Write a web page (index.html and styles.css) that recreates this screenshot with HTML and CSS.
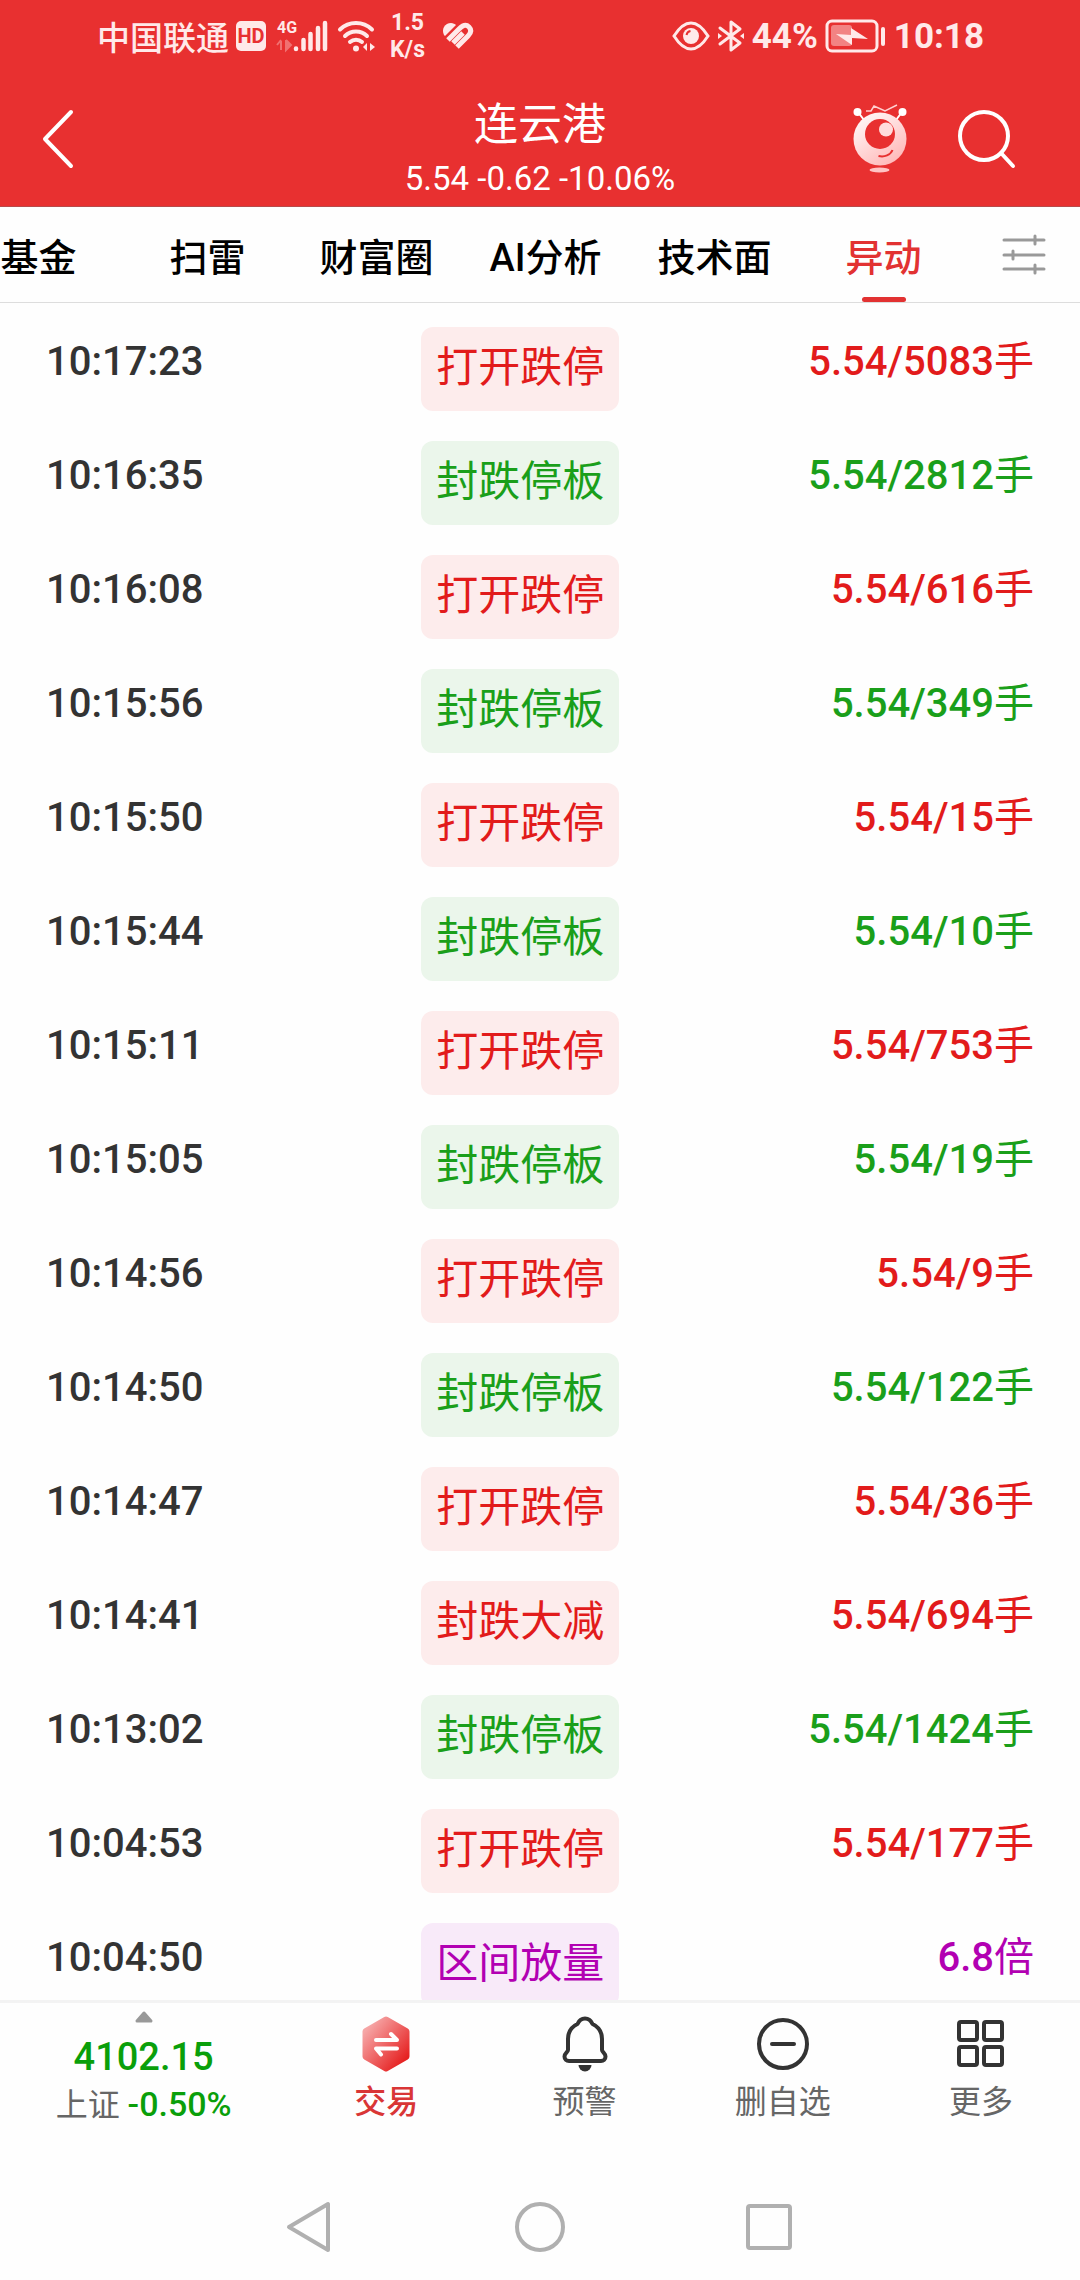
FILE: index.html
```html
<!DOCTYPE html>
<html lang="zh-CN">
<head>
    <meta charset="UTF-8">
    <meta name="viewport" content="width=device-width, initial-scale=1.0">
    <title>连云港</title>
    <link rel="stylesheet" href="styles.css">
</head>
<body>
    <div class="status">
        <div class="status-group">
            <span class="carrier">中国联通</span>
            <span class="hd">HD</span>
            <svg class="signal" width="52" height="32" viewBox="0 0 52 32">
                <text class="net" x="0" y="13">4G</text>
                <path d="M4 21v9M0 25l4-5M9 20v10l5-5-5-5" fill="#ffe9e9" stroke="#ffe9e9" stroke-width="2" opacity=".35"/>
                <path d="M19 28.500v.5M26.500 20v9M33.500 14v15M41 8v21M48 3v26" stroke="#ffe9e9" stroke-width="4.500" stroke-linecap="round"/>
            </svg>
            <svg class="wifi" width="38" height="32" viewBox="0 0 38 32" fill="none" stroke="#ffe9e9" stroke-width="4" stroke-linecap="round">
                <path d="M2 9.500a23 23 0 0 1 32 0M7 16a16 16 0 0 1 22 0M12 22a9 9 0 0 1 12 0"/>
                <circle cx="18" cy="28.500" r="3" fill="#ffe9e9" stroke="none"/>
                <path d="M29 23v8l-4-4zM32 23v8l5-4z" fill="#ffe9e9" stroke="none"/>
            </svg>
            <span class="speed">1.5<br>K/s</span>
            <svg class="heart" width="32" height="28" viewBox="0 0 32 28" fill="none" stroke="#ffe9e9" stroke-width="5">
                <path d="M2 13C-1 7 3 1 9 1c2 0 4 1 5 2L3 14z" fill="#ffe9e9" stroke="none"/>
                <path d="M6 18L17 7c4-4 7-5 10-2s2 6-1 9L15 25M11 21l10-10"/>
            </svg>
        </div>
        <div class="status-group">
            <svg width="38" height="30" viewBox="0 0 38 30">
                <path d="M2 15C8 5.500 13 2 19 2s11 3.500 17 13c-6 9.500-11 13-17 13S8 24.500 2 15z" fill="none" stroke="#ffe9e9" stroke-width="3"/>
                <circle cx="19" cy="15" r="8" fill="#ffe9e9"/>
                <path d="M14.500 14a5 5 0 0 1 4-4" fill="none" stroke="#e83030" stroke-width="2"/>
            </svg>
            <svg class="bluetooth" width="28" height="32" viewBox="0 0 28 32" fill="none" stroke="#ffe9e9" stroke-width="3" stroke-linejoin="round" stroke-linecap="round">
                <path d="M3 8l20 15-9 7V2l9 7L3 24"/>
                <path d="M1 13v6l4-3zM27 13v6l-4-3z" fill="#ffe9e9" stroke="none"/>
            </svg>
            <span class="status-num">44%</span>
            <svg class="battery" width="62" height="34" viewBox="0 0 62 34">
                <rect x="2" y="2" width="50" height="30" rx="5" fill="none" stroke="#ffe9e9" stroke-width="3"/>
                <rect x="6" y="6" width="21" height="21" rx="3" fill="#ffe9e9" opacity=".45"/>
                <path d="M11 15l15 1V9l17 11-16-1v7z" fill="#ffe9e9"/>
                <path d="M58 10v15" stroke="#ffe9e9" stroke-width="4" stroke-linecap="round"/>
            </svg>
            <span class="status-num">10:18</span>
        </div>
    </div>

    <header class="header">
        <button class="back" aria-label="返回">
            <svg width="32" height="58" viewBox="0 0 32 58" fill="none" stroke="#fff" stroke-width="4" stroke-linecap="round" stroke-linejoin="round">
                <path d="M29 2L3 29l26 27"/>
            </svg>
        </button>
        <div class="stock">
            <h1>连云港</h1>
            <p>5.54 -0.62 -10.06%</p>
        </div>
        <div class="header-actions">
            <button aria-label="助手">
                <svg width="54" height="70" viewBox="0 0 54 70">
                    <defs>
                        <linearGradient id="robot" x1="0" y1="0" x2=".7" y2="1">
                            <stop offset="0" stop-color="#fff"/>
                            <stop offset="1" stop-color="#ffb9b9"/>
                        </linearGradient>
                    </defs>
                    <path d="M5 8l6 8M49 8l-6 8" stroke="#fff" stroke-width="2"/>
                    <circle cx="4.500" cy="8" r="4" fill="#fff"/>
                    <circle cx="49.500" cy="8" r="4" fill="#fff"/>
                    <path d="M13 7h5l3-5 11 5L44 1" fill="none" stroke="#ffd0d0" stroke-width="1.500"/>
                    <circle cx="27" cy="35" r="26.500" fill="url(#robot)"/>
                    <circle cx="27" cy="30" r="15" fill="#e83030"/>
                    <circle cx="33" cy="25.500" r="7" fill="#ffdcdc"/>
                    <path d="M25.500 52c6 1.500 12-1 14-6" fill="none" stroke="#e83030" stroke-width="2"/>
                    <ellipse cx="26.500" cy="66" rx="10" ry="2.500" fill="#ffc4c4"/>
                </svg>
            </button>
            <button aria-label="搜索">
                <svg width="58" height="60" viewBox="0 0 58 60" fill="none" stroke="#fff" stroke-width="4" stroke-linecap="round">
                    <circle cx="26" cy="27" r="24"/>
                    <path d="M43 44l12 13"/>
                </svg>
            </button>
        </div>
    </header>

    <nav class="tabs">
        <div class="tab-list">
            <a class="tab" href="#">基金</a>
            <a class="tab" href="#">扫雷</a>
            <a class="tab" href="#">财富圈</a>
            <a class="tab" href="#">AI分析</a>
            <a class="tab" href="#">技术面</a>
            <a class="tab active" href="#">异动</a>
        </div>
        <button class="filter" aria-label="设置">
            <svg width="44" height="42" viewBox="0 0 44 42" stroke="#999" stroke-width="3" stroke-linecap="round">
                <path d="M2 6h40M2 21h40M2 35h40M33 2v8M11 17v8M33 31v8"/>
            </svg>
        </button>
    </nav>

    <main class="list">
        <table class="events">
            <colgroup><col class="col-time"><col class="col-type"><col class="col-value"></colgroup>
            <tbody>
                <tr class="up"><td>10:17:23</td><td><span class="badge">打开跌停</span></td><td>5.54/5083<span class="unit">手</span></td></tr>
                <tr class="down"><td>10:16:35</td><td><span class="badge">封跌停板</span></td><td>5.54/2812<span class="unit">手</span></td></tr>
                <tr class="up"><td>10:16:08</td><td><span class="badge">打开跌停</span></td><td>5.54/616<span class="unit">手</span></td></tr>
                <tr class="down"><td>10:15:56</td><td><span class="badge">封跌停板</span></td><td>5.54/349<span class="unit">手</span></td></tr>
                <tr class="up"><td>10:15:50</td><td><span class="badge">打开跌停</span></td><td>5.54/15<span class="unit">手</span></td></tr>
                <tr class="down"><td>10:15:44</td><td><span class="badge">封跌停板</span></td><td>5.54/10<span class="unit">手</span></td></tr>
                <tr class="up"><td>10:15:11</td><td><span class="badge">打开跌停</span></td><td>5.54/753<span class="unit">手</span></td></tr>
                <tr class="down"><td>10:15:05</td><td><span class="badge">封跌停板</span></td><td>5.54/19<span class="unit">手</span></td></tr>
                <tr class="up"><td>10:14:56</td><td><span class="badge">打开跌停</span></td><td>5.54/9<span class="unit">手</span></td></tr>
                <tr class="down"><td>10:14:50</td><td><span class="badge">封跌停板</span></td><td>5.54/122<span class="unit">手</span></td></tr>
                <tr class="up"><td>10:14:47</td><td><span class="badge">打开跌停</span></td><td>5.54/36<span class="unit">手</span></td></tr>
                <tr class="up"><td>10:14:41</td><td><span class="badge">封跌大减</span></td><td>5.54/694<span class="unit">手</span></td></tr>
                <tr class="down"><td>10:13:02</td><td><span class="badge">封跌停板</span></td><td>5.54/1424<span class="unit">手</span></td></tr>
                <tr class="up"><td>10:04:53</td><td><span class="badge">打开跌停</span></td><td>5.54/177<span class="unit">手</span></td></tr>
                <tr class="volume"><td>10:04:50</td><td><span class="badge">区间放量</span></td><td>6.8<span class="unit">倍</span></td></tr>
            </tbody>
        </table>
    </main>

    <footer class="toolbar">
        <button class="index">
            <svg width="20" height="12" viewBox="0 0 20 12">
                <path d="M10 2l7 8H3z" fill="#999" stroke="#999" stroke-width="3" stroke-linejoin="round"/>
            </svg>
            <span class="index-value">4102.15</span>
            <span class="index-change">上证 <b>-0.50%</b></span>
        </button>
        <button class="tool trade">
            <svg width="56" height="56" viewBox="0 0 56 56">
                <defs>
                    <linearGradient id="hex" x1="0" y1="0" x2="1" y2="1">
                        <stop offset="0.100" stop-color="#f6a6a6"/>
                        <stop offset="0.900" stop-color="#e62222"/>
                    </linearGradient>
                </defs>
                <path d="M28 4l20 11.500v25L28 52 8 40.500v-25z" fill="url(#hex)" stroke="url(#hex)" stroke-width="7" stroke-linejoin="round"/>
                <path d="M18 24h21l-6-6M39 32.500H18l5 6" fill="none" stroke="#fff" stroke-width="4" stroke-linecap="round" stroke-linejoin="round"/>
            </svg>
            <span>交易</span>
        </button>
        <button class="tool">
            <svg width="56" height="56" viewBox="0 0 56 56" fill="none" stroke="#333" stroke-width="4" stroke-linejoin="round">
                <path d="M28 2.500c-4 0-6 2-7.500 5.500C14 11 11 16.500 11 23v11c0 2-3.500 3-3.500 6.500 0 3 2 4.500 4.500 4.500h32c2.500 0 4.500-1.500 4.500-4.500 0-3.500-3.500-4.500-3.500-6.500V23c0-6.500-3-12-9.500-15C34 4.500 32 2.500 28 2.500z"/>
                <path d="M21.500 49h13a6.500 6.500 0 0 1-13 0z" fill="#333" stroke="none"/>
            </svg>
            <span>预警</span>
        </button>
        <button class="tool">
            <svg width="56" height="56" viewBox="0 0 56 56" fill="none" stroke="#333" stroke-width="4" stroke-linecap="round">
                <circle cx="28" cy="28" r="24"/>
                <path d="M17 28h22"/>
            </svg>
            <span>删自选</span>
        </button>
        <button class="tool">
            <svg width="56" height="56" viewBox="0 0 56 56" fill="none" stroke="#333" stroke-width="4">
                <rect x="6" y="6" width="18" height="18" rx="2"/>
                <rect x="31" y="6" width="18" height="18" rx="2"/>
                <rect x="6" y="31" width="18" height="18" rx="2"/>
                <rect x="31" y="31" width="18" height="18" rx="2"/>
            </svg>
            <span>更多</span>
        </button>
    </footer>

    <div class="system-nav">
        <button aria-label="返回">
            <svg width="52" height="52" viewBox="0 0 52 52" fill="none" stroke="#b0b0b0" stroke-width="4" stroke-linejoin="round">
                <path d="M43 3v46L4 26z"/>
            </svg>
        </button>
        <button aria-label="主页">
            <svg width="52" height="52" viewBox="0 0 52 52" fill="none" stroke="#b0b0b0" stroke-width="4">
                <circle cx="26" cy="26" r="23"/>
            </svg>
        </button>
        <button aria-label="最近任务">
            <svg width="52" height="52" viewBox="0 0 52 52" fill="none" stroke="#b0b0b0" stroke-width="4">
                <rect x="5" y="5" width="42" height="42" rx="2"/>
            </svg>
        </button>
    </div>
</body>
</html>
```
FILE: styles.css
```css
* {
    box-sizing: border-box;
}

body {
    margin: 0;
    height: 100vh;
    display: flex;
    flex-direction: column;
    background: #fefefe;
    color: #333;
    font-family: Roboto, "Noto Sans CJK SC", sans-serif;
}

button {
    padding: 0;
    border: none;
    background: none;
    color: inherit;
    font: inherit;
    cursor: pointer;
}

svg {
    display: block;
    flex-shrink: 0;
    overflow: visible;
}

/* Phone status bar */
.status {
    display: flex;
    justify-content: space-between;
    height: 72px;
    padding: 0 96px 0 97px;
    background: #e83030;
    color: #ffe9e9;
}

.status-group {
    display: flex;
    align-items: center;
    gap: 7px;
}

.carrier {
    font-size: 33px;
    font-weight: 500;
}

.hd {
    width: 30px;
    border-radius: 5px;
    background: #ffe9e9;
    color: #e83030;
    font-size: 20px;
    font-weight: 700;
    line-height: 30px;
    text-align: center;
}

.signal {
    margin-left: 4px;
}

.net {
    fill: #ffe9e9;
    font-size: 16px;
    font-weight: 700;
}

.wifi {
    margin-left: 2px;
}

.speed {
    margin-left: 7px;
    font-size: 23px;
    font-weight: 700;
    line-height: 27px;
    text-align: center;
}

.heart {
    margin-left: 10px;
}

.status-num {
    font-size: 35px;
    font-weight: 700;
}

/* Title bar */
.header {
    display: grid;
    grid-template-columns: 1fr auto 1fr;
    align-items: center;
    height: 135px;
    padding: 0 42px;
    border-bottom: 1px solid #b84a4a;
    background: #e83030;
    color: #fff;
}

.back {
    justify-self: start;
}

.stock {
    padding-top: 22px;
    text-align: center;
}

.stock h1 {
    margin: 0;
    font-size: 44px;
    font-weight: 400;
    line-height: 58px;
}

.stock p {
    margin: 0;
    font-size: 33px;
    line-height: 50px;
}

.header-actions {
    display: flex;
    align-items: center;
    justify-content: flex-end;
    gap: 51px;
    padding-right: 22px;
}

/* Section tabs */
.tabs {
    display: flex;
    height: 96px;
    border-bottom: 1px solid #ddd;
}

.tab-list {
    display: flex;
    flex: 1;
    justify-content: flex-end;
    overflow: hidden;
}

.tab {
    display: flex;
    flex: 0 0 169px;
    flex-direction: column;
    align-items: center;
    color: #000;
    font-size: 38px;
    font-weight: 500;
    line-height: 102px;
    text-decoration: none;
    white-space: nowrap;
}

.tab.active {
    position: relative;
    color: #e23232;
}

.tab.active::after {
    content: "";
    position: absolute;
    bottom: 0;
    width: 44px;
    height: 5px;
    border-radius: 3px;
    background: #e23232;
}

.filter {
    display: flex;
    align-items: center;
    justify-content: center;
    width: 112px;
}

/* Event list */
.list {
    flex: 1;
    min-height: 0;
    padding: 24px 46px 0;
    overflow: hidden;
}

.events {
    width: 100%;
    border-collapse: collapse;
    table-layout: fixed;
    font-size: 40px;
    font-weight: 500;
    line-height: 69px;
}

.col-time {
    width: 38%;
}

.col-type {
    width: 20%;
}

.col-value {
    width: 42%;
}

.events tr {
    height: 114px;
}

.events td {
    padding: 0;
    vertical-align: top;
    white-space: nowrap;
}

.events td:last-child {
    text-align: right;
}

.badge {
    display: block;
    padding: 13px 0 15px;
    border-radius: 12px;
    font-weight: 400;
    font-size: 42px;
    line-height: 56px;
    text-align: center;
}

.unit {
    font-weight: 400;
}

.up .badge,
.up td:last-child {
    color: #e21b1b;
}

.up .badge {
    background: #fdecec;
}

.down .badge,
.down td:last-child {
    color: #1a9f1a;
}

.down .badge {
    background: #ebf6eb;
}

.volume .badge,
.volume td:last-child {
    color: #b200b2;
}

.volume .badge {
    background: #f8eaf9;
}

/* Bottom toolbar */
.toolbar {
    display: grid;
    grid-template-columns: 287fr repeat(4, 198fr);
    align-items: start;
    height: 174px;
    border-top: 3px solid #f3f3f3;
    color: #666;
}

.index,
.tool {
    display: flex;
    flex-direction: column;
    align-items: center;
}

.index {
    padding-top: 8px;
}

.index-value {
    margin-top: 10px;
    color: #0a9f0a;
    font-size: 38px;
    font-weight: 500;
    line-height: 48px;
}

.index-change {
    font-size: 32px;
    line-height: 46px;
}

.index-change b {
    color: #0a9f0a;
    font-size: 34px;
    font-weight: 500;
}

.tool {
    gap: 6px;
    padding-top: 13px;
    font-size: 32px;
    line-height: 48px;
}

.trade {
    color: #d93636;
    font-weight: 500;
}

/* Phone navigation keys */
.system-nav {
    display: flex;
    align-items: center;
    justify-content: center;
    gap: 177px;
    height: 106px;
}
```
